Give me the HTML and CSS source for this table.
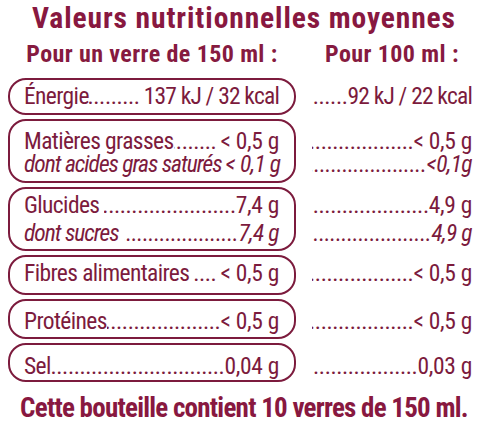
FILE: index.html
```html
<!DOCTYPE html>
<html lang="fr">
<head>
<meta charset="utf-8">
<title>Valeurs nutritionnelles</title>
<link rel="stylesheet" href="styles.css">
</head>
<body>
<div class="panel">
  <h1 class="title">Valeurs nutritionnelles moyennes</h1>
  <div class="heads">
    <div class="colhead">Pour un verre de 150 ml :</div>
    <div class="colhead">Pour 100 ml :</div>
  </div>
  <div class="grid">
    <div class="box r1">
      <div class="line"><span class="lbl">Énergie</span><span class="dots"></span><span class="val sp kj">137 kJ / 32 kcal</span></div>
    </div>
    <div class="cell r1">
      <div class="line"><span class="dots"></span><span class="val kj">92 kJ / 22 kcal</span></div>
    </div>

    <div class="box r2">
      <div class="line"><span class="lbl">Matières grasses</span><span class="dots"></span><span class="val sp">&lt; 0,5 g</span></div>
      <div class="line it"><span class="lbl">dont acides gras saturés</span><span class="dots"></span><span class="val sp">&lt; 0,1 g</span></div>
    </div>
    <div class="cell r2">
      <div class="line"><span class="dots"></span><span class="val">&lt; 0,5 g</span></div>
      <div class="line it"><span class="dots"></span><span class="val">&lt;0,1g</span></div>
    </div>

    <div class="box r3">
      <div class="line"><span class="lbl gap">Glucides</span><span class="dots"></span><span class="val">7,4 g</span></div>
      <div class="line it"><span class="lbl gap">dont sucres</span><span class="dots"></span><span class="val">7,4 g</span></div>
    </div>
    <div class="cell r3">
      <div class="line"><span class="dots"></span><span class="val">4,9 g</span></div>
      <div class="line it"><span class="dots"></span><span class="val">4,9 g</span></div>
    </div>

    <div class="box r4">
      <div class="line"><span class="lbl gap">Fibres alimentaires</span><span class="dots"></span><span class="val sp">&lt; 0,5 g</span></div>
    </div>
    <div class="cell r4">
      <div class="line"><span class="dots"></span><span class="val">&lt; 0,5 g</span></div>
    </div>

    <div class="box r5">
      <div class="line"><span class="lbl">Protéines</span><span class="dots"></span><span class="val">&lt; 0,5 g</span></div>
    </div>
    <div class="cell r5">
      <div class="line"><span class="dots"></span><span class="val">&lt; 0,5 g</span></div>
    </div>

    <div class="box r6">
      <div class="line"><span class="lbl">Sel</span><span class="dots"></span><span class="val">0,04 g</span></div>
    </div>
    <div class="cell r6">
      <div class="line"><span class="dots"></span><span class="val">0,03 g</span></div>
    </div>
  </div>
  <p class="foot">Cette bouteille contient 10 verres de 150 ml.</p>
</div>
</body>
</html>
```
FILE: styles.css
```css
html, body {
  margin: 0;
  padding: 0;
  background: #ffffff;
}

.panel {
  width: 488px;
  height: 424px;
  overflow: hidden;
  font-family: "Roboto Condensed", Roboto, "Liberation Sans", sans-serif;
  font-stretch: 75%;
  color: #7c1b3d;
}

.title {
  margin: 0;
  padding-top: 1px;
  text-align: center;
  font-size: 29.5px;
  line-height: 34px;
  font-weight: 700;
  letter-spacing: 0.9px;
  color: #881840;
}

.heads {
  display: grid;
  grid-template-columns: 288px 164px;
  column-gap: 14px;
  margin: 5px 0 0 8px;
}

.colhead {
  text-align: center;
  font-size: 24px;
  line-height: 28px;
  font-weight: 700;
  letter-spacing: 0.4px;
  color: #861a40;
}

.grid {
  display: grid;
  grid-template-columns: 288px 164px;
  column-gap: 14px;
  row-gap: 4px;
  margin: 10px 0 0 8px;
}

.box,
.cell {
  box-sizing: border-box;
  border: 2px solid transparent;
  font-size: 23.5px;
  font-weight: 400;
  line-height: 29px;
  letter-spacing: -0.6px;
}

.box {
  border-color: #7c1b3d;
  border-radius: 18px;
  padding-left: 14px;
  padding-right: 15px;
}

.cell {
  padding-right: 0;
}

.r1 { height: 37px; padding-top: 2px; }
.r2 { height: 64px; padding-top: 9px; line-height: 23px; }
.r3 { height: 64px; padding-top: 2px; line-height: 28px; }
.r4 { height: 40px; padding-top: 2px; }
.r5 { height: 40px; padding-top: 6px; }
.r6 { height: 39px; padding-top: 7px; }

.line {
  display: flex;
  align-items: baseline;
  white-space: nowrap;
}

.it {
  font-style: italic;
  letter-spacing: -1px;
}

.lbl {
  flex: none;
}

.lbl.gap {
  margin-right: 5px;
}

.dots {
  flex: 1 1 0;
  min-width: 0;
  overflow: hidden;
  direction: rtl;
  white-space: nowrap;
  letter-spacing: -0.4px;
}

.dots::before {
  content: "....................................................................................................";
}

.val {
  flex: none;
  letter-spacing: -0.3px;
}

.val.kj {
  letter-spacing: -0.8px;
}

.it .val {
  letter-spacing: -0.6px;
}

.val.sp {
  margin-left: 4px;
}

.foot {
  margin: 9px 0 0;
  text-align: center;
  font-size: 27px;
  line-height: 34px;
  font-weight: 700;
  letter-spacing: -0.75px;
  color: #881840;
}
```
